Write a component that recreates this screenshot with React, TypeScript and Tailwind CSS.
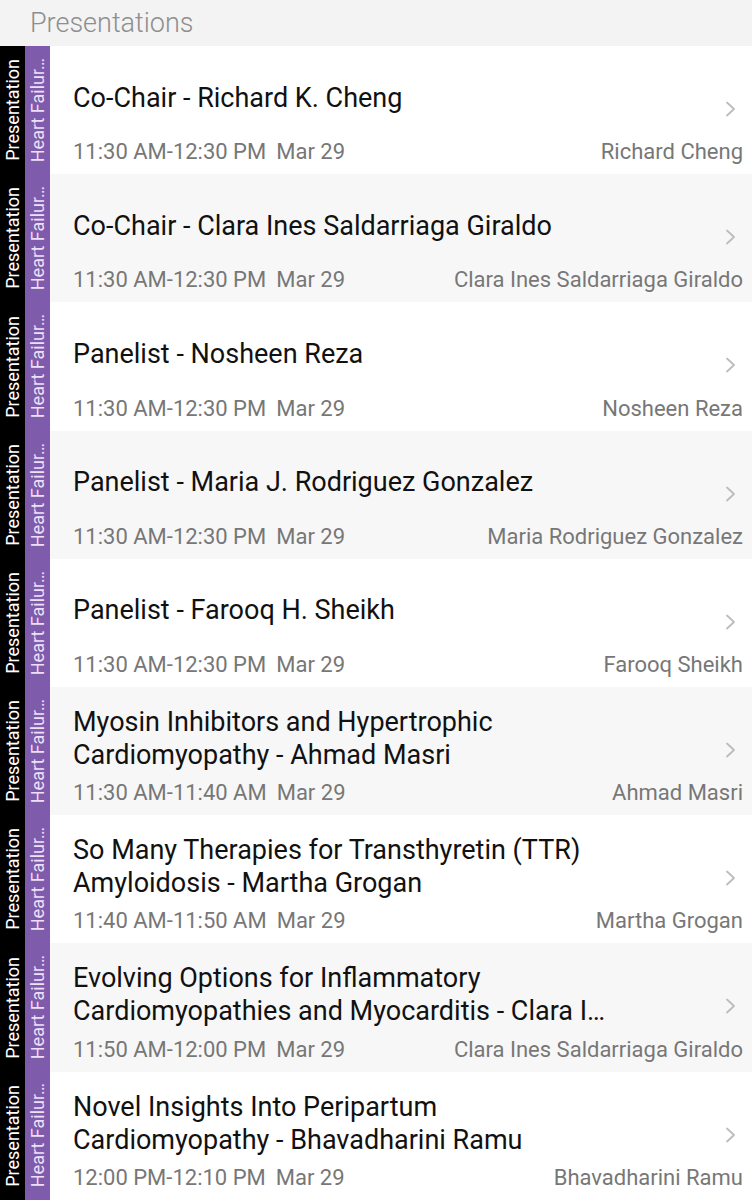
import React from "react";

type Item = { title: string; time: string; date: string; name: string };

const items: Item[] = [
  { title: "Co-Chair - Richard K. Cheng", time: "11:30 AM-12:30 PM", date: "Mar 29", name: "Richard Cheng" },
  { title: "Co-Chair - Clara Ines Saldarriaga Giraldo", time: "11:30 AM-12:30 PM", date: "Mar 29", name: "Clara Ines Saldarriaga Giraldo" },
  { title: "Panelist - Nosheen Reza", time: "11:30 AM-12:30 PM", date: "Mar 29", name: "Nosheen Reza" },
  { title: "Panelist - Maria J. Rodriguez Gonzalez", time: "11:30 AM-12:30 PM", date: "Mar 29", name: "Maria Rodriguez Gonzalez" },
  { title: "Panelist - Farooq H. Sheikh", time: "11:30 AM-12:30 PM", date: "Mar 29", name: "Farooq Sheikh" },
  { title: "Myosin Inhibitors and Hypertrophic Cardiomyopathy - Ahmad Masri", time: "11:30 AM-11:40 AM", date: "Mar 29", name: "Ahmad Masri" },
  { title: "So Many Therapies for Transthyretin (TTR) Amyloidosis - Martha Grogan", time: "11:40 AM-11:50 AM", date: "Mar 29", name: "Martha Grogan" },
  { title: "Evolving Options for Inflammatory Cardiomyopathies and Myocarditis - Clara I…", time: "11:50 AM-12:00 PM", date: "Mar 29", name: "Clara Ines Saldarriaga Giraldo" },
  { title: "Novel Insights Into Peripartum Cardiomyopathy - Bhavadharini Ramu", time: "12:00 PM-12:10 PM", date: "Mar 29", name: "Bhavadharini Ramu" },
];

function Chevron() {
  return (
    <svg width="14" height="20" viewBox="0 0 14 20" fill="none">
      <path d="M4 3.5 L11 10 L4 16.5" stroke="#bcbcbc" strokeWidth="1.8" strokeLinecap="round" strokeLinejoin="round" />
    </svg>
  );
}

function Row({ item, idx }: { item: Item; idx: number }) {
  const bg = idx % 2 === 0 ? "bg-white" : "bg-[#f7f7f7]";
  return (
    <div className={`flex h-[128.2px] ${bg}`}>
      <div className="w-[25px] bg-black flex items-center justify-center overflow-hidden">
        <span className="[writing-mode:vertical-rl] rotate-180 text-white text-[18px] leading-none whitespace-nowrap">
          Presentation
        </span>
      </div>
      <div className="w-[25px] bg-[#7e5bab] flex items-center justify-center overflow-hidden">
        <span className="[writing-mode:vertical-rl] rotate-180 text-[#ecdff7] text-[18px] leading-none whitespace-nowrap">
          Heart Failur…
        </span>
      </div>
      <div className="flex-1 flex flex-col pl-[23px] pr-[9px]">
        <div className="flex-1 flex items-start pt-[11px]">
          <div className="flex-1 h-full flex items-center">
            <div className="w-[536px] text-[27px] leading-[33px] text-[#111] line-clamp-2">{item.title}</div>
          </div>
          <div className="self-center mt-[22px] mr-[6px]">
            <Chevron />
          </div>
        </div>
        <div className="flex items-center justify-between text-[22px] leading-[26px] text-[#777777] pb-[9px]">
          <div className="flex gap-[10px] whitespace-nowrap">
            <span>{item.time}</span>
            <span>{item.date}</span>
          </div>
          <span className="whitespace-nowrap">{item.name}</span>
        </div>
      </div>
    </div>
  );
}

export default function App() {
  return (
    <div className="w-[752px] h-[1200px] overflow-hidden bg-[#f3f3f3] font-['Roboto',sans-serif]">
      <div className="h-[46px] flex items-center pl-[30px]">
        <span className="text-[27px] font-light text-[#8e8e8e]">Presentations</span>
      </div>
      {items.map((it, i) => (
        <Row key={i} item={it} idx={i} />
      ))}
    </div>
  );
}
